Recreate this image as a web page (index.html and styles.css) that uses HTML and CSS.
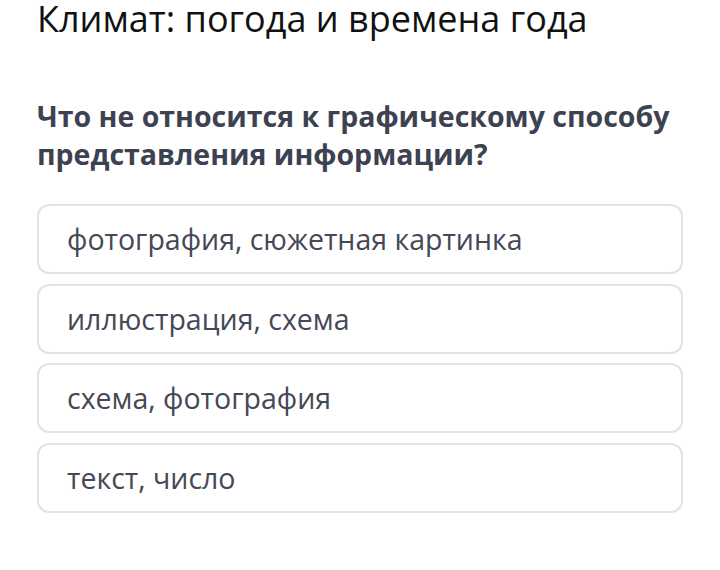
FILE: index.html
```html
<!DOCTYPE html>
<html lang="ru">
<head>
<meta charset="utf-8">
<link rel="stylesheet" href="styles.css">
</head>
<body>
<div class="page">
  <h1 class="title">Климат: погода и времена года</h1>
  <h2 class="question">Что не относится к графическому способу представления информации?</h2>
  <div class="options">
    <div class="option">фотография, сюжетная картинка</div>
    <div class="option">иллюстрация, схема</div>
    <div class="option">схема, фотография</div>
    <div class="option">текст, число</div>
  </div>
</div>
</body>
</html>
```
FILE: styles.css
```css
html, body {
  margin: 0;
  padding: 0;
  background: #fff;
}
.page {
  padding: 0 30px 0 37px;
  font-family: "Open Sans", sans-serif;
}
.title {
  margin: 0;
  font-size: 36px;
  font-weight: 400;
  line-height: 38px;
  color: #111;
}
.question {
  margin: 59px 0 0;
  font-size: 28.5px;
  font-weight: 700;
  line-height: 38px;
  color: #3d4250;
}
.options {
  margin-top: 31px;
  display: flex;
  flex-direction: column;
  gap: 9.5px;
  width: 646px;
}
.option {
  box-sizing: border-box;
  height: 70px;
  border: 2px solid #e3e3e3;
  border-radius: 12px;
  padding: 0 28px;
  font-size: 28.5px;
  line-height: 66px;
  color: #444955;
}
```
